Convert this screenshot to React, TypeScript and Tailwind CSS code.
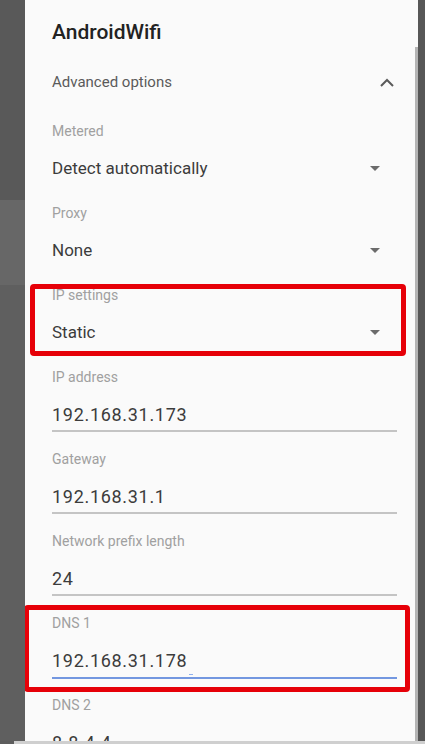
import React from "react";

const Tri = () => (
  <svg width="10" height="6" viewBox="0 0 10 6" className="shrink-0">
    <path d="M0 0 L10 0 L5 5 Z" fill="#6b6b6b" />
  </svg>
);

function Dropdown({ label, value }: { label: string; value: string }) {
  return (
    <div className="h-[82px] shrink-0 flex flex-col">
      <div className="h-[20px] shrink-0 leading-[20px] text-[14px] text-[#a0a0a0]">{label}</div>
      <div className="mt-[16px] h-[24px] shrink-0 flex items-center justify-between pr-[35px]">
        <span className="text-[17px] text-[#3c3c3c]">{value}</span>
        <Tri />
      </div>
    </div>
  );
}

function Input({
  label,
  value,
  focused,
}: {
  label: string;
  value: string;
  focused?: boolean;
}) {
  return (
    <div className="h-[82px] shrink-0 flex flex-col">
      <div className="h-[20px] shrink-0 leading-[20px] text-[14px] text-[#a0a0a0]">{label}</div>
      <div className="mt-[16px] h-[24px] shrink-0 leading-[24px] text-[18px] text-[#3c3c3c] tracking-[0.7px] relative">
        {value}
        {focused && (
          <span className="absolute left-[137px] top-[25px] w-[4px] h-[1px] bg-[#8fb0ee]" />
        )}
      </div>
      <div
        className={
          focused
            ? "mt-[4px] h-[2px] shrink-0 bg-[#7397e0]"
            : "mt-[3px] h-[2px] shrink-0 bg-[#c4c4c4]"
        }
      />
    </div>
  );
}

export default function App() {
  return (
    <div
      className="w-[425px] h-[744px] overflow-hidden bg-[#5d5d5d] flex flex-col"
      style={{ fontFamily: "Roboto, 'Noto Sans', sans-serif" }}
    >
      <div className="h-[741px] shrink-0 flex">
        {/* left backdrop */}
        <div className="w-[25px] flex flex-col">
          <div className="h-[200px] shrink-0 bg-[#595959]" />
          <div className="h-[85px] shrink-0 bg-[#676767]" />
          <div className="flex-1 bg-[#5f5f5f]" />
        </div>
        {/* dialog */}
        <div className="w-[393px] bg-[#fafafa] flex overflow-hidden">
          <div className="flex-1 pl-[27px] flex flex-col">
            <div className="h-[66px] shrink-0 flex items-center text-[21px] font-medium text-[#222]">
              AndroidWifi
            </div>
            <div className="h-[32px] shrink-0 flex items-center justify-between pr-[21px]">
              <span className="text-[15px] text-[#5a5a5a]">Advanced options</span>
              <svg width="14" height="9" viewBox="0 0 14 9">
                <path d="M1 8 L7 2 L13 8" stroke="#5a5a5a" strokeWidth="2" fill="none" />
              </svg>
            </div>
            <div className="h-[23px] shrink-0" />
            <Dropdown label="Metered" value="Detect automatically" />
            <Dropdown label="Proxy" value="None" />
            <div className="relative shrink-0">
              <div className="absolute left-[-22px] top-[-1px] w-[376px] h-[72px] border-[5px] border-[#e60008] rounded-[4px]" />
              <Dropdown label="IP settings" value="Static" />
            </div>
            <div className="pr-[18px] shrink-0 flex flex-col">
              <Input label="IP address" value="192.168.31.173" />
              <Input label="Gateway" value="192.168.31.1" />
              <Input label="Network prefix length" value="24" />
              <div className="relative shrink-0">
                <div className="absolute left-[-28px] top-[-8px] w-[386px] h-[87px] border-[5px] border-[#e60008] rounded-[4px]" />
                <Input label="DNS 1" value="192.168.31.178" focused />
              </div>
              <Input label="DNS 2" value="8.8.4.4" />
            </div>
          </div>
          {/* scrollbar */}
          <div className="w-[3px] flex flex-col">
            <div className="h-[47px] shrink-0" />
            <div className="flex-1 bg-[#b4b4b4]" />
          </div>
        </div>
        <div className="flex-1 bg-[#575757]" />
      </div>
      <div className="h-[3px] shrink-0 ml-[14px] bg-[#cfcfcf]" />
    </div>
  );
}
